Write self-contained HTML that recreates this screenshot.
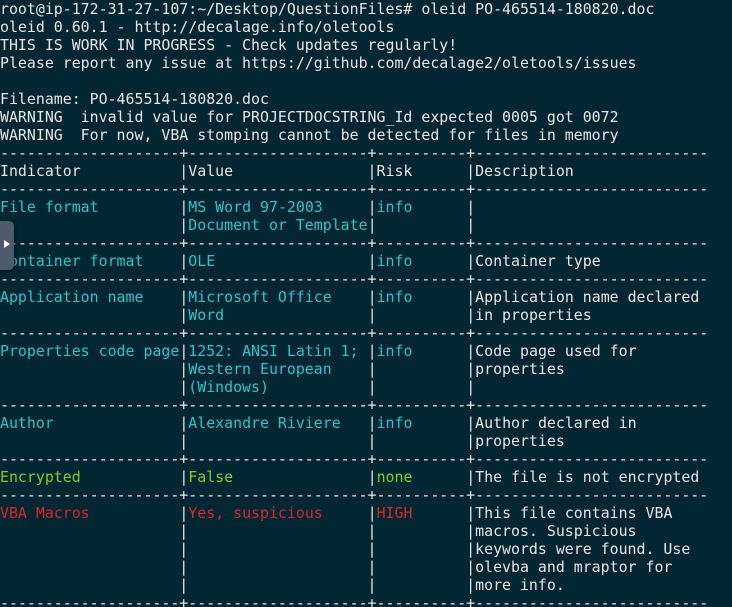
<!DOCTYPE html>
<html><head><meta charset="utf-8"><style>
html,body{margin:0;padding:0;background:#022732;width:732px;height:607px;overflow:hidden}
pre{margin:0;padding:0;font-family:"DejaVu Sans Mono","Liberation Mono",monospace;font-size:14.9px;line-height:18px;color:#e6e6e6;white-space:pre;position:relative;top:0}
.c{color:#2cc5c8}.g{color:#7fcb2c}.r{color:#d8282c}
.h{position:absolute;left:0;top:221px;width:14px;height:49px;background:#4d5b6c;border-radius:0 5px 5px 0;box-shadow:1px 1px 3px rgba(0,0,0,.5)}
.t{position:absolute;left:4px;top:19px;width:0;height:0;border-left:6px solid #fff;border-top:4px solid transparent;border-bottom:4px solid transparent}
</style></head><body>
<pre>root@ip-172-31-27-107:~/Desktop/QuestionFiles# oleid PO-465514-180820.doc
oleid 0.60.1 - http://decalage.info/oletools
THIS IS WORK IN PROGRESS - Check updates regularly!
Please report any issue at https://github.com/decalage2/oletools/issues

Filename: PO-465514-180820.doc
WARNING  invalid value for PROJECTDOCSTRING_Id expected 0005 got 0072
WARNING  For now, VBA stomping cannot be detected for files in memory
--------------------+--------------------+----------+--------------------------
Indicator           |Value               |Risk      |Description
--------------------+--------------------+----------+--------------------------
<span class="c">File format         </span>|<span class="c">MS Word 97-2003     </span>|<span class="c">info      </span>|
                    |<span class="c">Document or Template</span>|          |
--------------------+--------------------+----------+--------------------------
<span class="c">Container format    </span>|<span class="c">OLE                 </span>|<span class="c">info      </span>|Container type
--------------------+--------------------+----------+--------------------------
<span class="c">Application name    </span>|<span class="c">Microsoft Office    </span>|<span class="c">info      </span>|Application name declared
                    |<span class="c">Word                </span>|          |in properties
--------------------+--------------------+----------+--------------------------
<span class="c">Properties code page</span>|<span class="c">1252: ANSI Latin 1; </span>|<span class="c">info      </span>|Code page used for
                    |<span class="c">Western European    </span>|          |properties
                    |<span class="c">(Windows)           </span>|          |
--------------------+--------------------+----------+--------------------------
<span class="c">Author              </span>|<span class="c">Alexandre Riviere   </span>|<span class="c">info      </span>|Author declared in
                    |                    |          |properties
--------------------+--------------------+----------+--------------------------
<span class="g">Encrypted           </span>|<span class="g">False               </span>|<span class="g">none      </span>|The file is not encrypted
--------------------+--------------------+----------+--------------------------
<span class="r">VBA Macros          </span>|<span class="r">Yes, suspicious     </span>|<span class="r">HIGH      </span>|This file contains VBA
                    |                    |          |macros. Suspicious
                    |                    |          |keywords were found. Use
                    |                    |          |olevba and mraptor for
                    |                    |          |more info.
--------------------+--------------------+----------+--------------------------</pre>
<div class="h"><div class="t"></div></div>
</body></html>
